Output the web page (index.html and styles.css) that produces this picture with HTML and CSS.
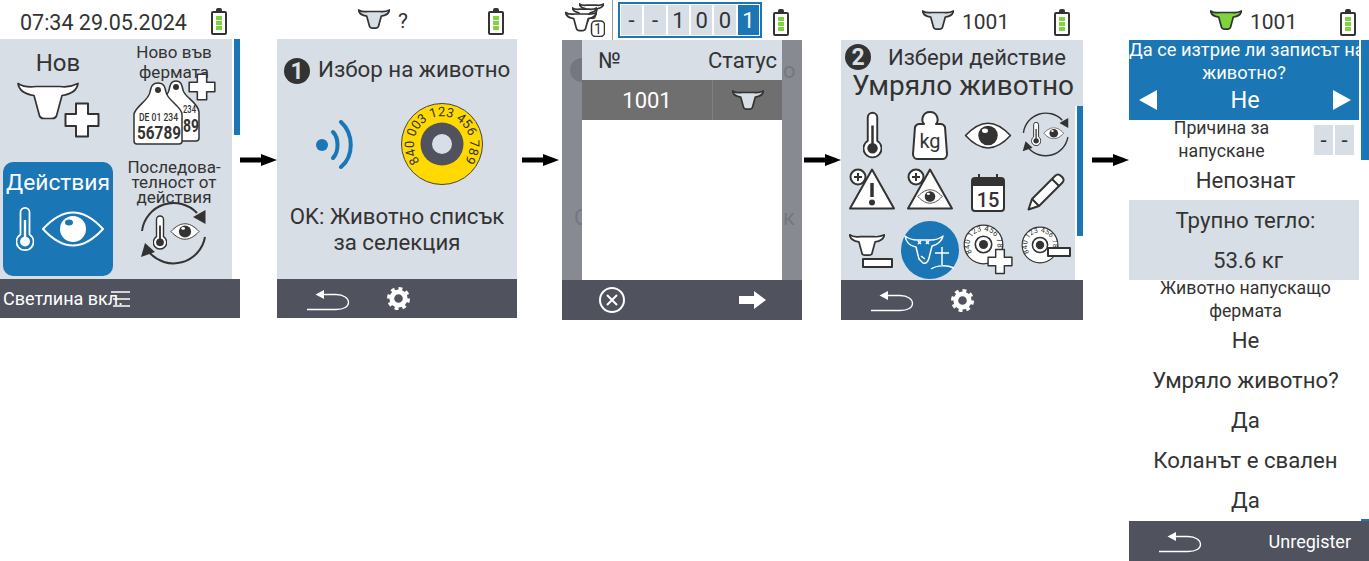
FILE: index.html
```html
<!DOCTYPE html>
<html lang="bg">
<head>
    <meta charset="UTF-8">
    <title>Умряло животно</title>
    <link rel="stylesheet" href="styles.css">
</head>
<body>
<svg class="defs" aria-hidden="true">
    <symbol id="cow" viewBox="0 0 62 38">
        <path class="cow-shape" d="M1 1.500C5 4 12 5.500 19 4.500H43C50 5.500 56 4 61 1.500C60 8 55 12 45 13.500L40 32C39.500 35 38 36.500 35 36.500H27C24 36.500 22.500 35 22 32L17 13.500C7 12 2 8 1 1.500Z"/>
    </symbol>
    <symbol id="plus" viewBox="0 0 36 36">
        <path class="ln" d="M12 1.500H24V12H34.500V24H24V34.500H12V24H1.500V12H12Z"/>
    </symbol>
    <symbol id="back" viewBox="0 0 44 22">
        <path class="soft-line" d="M16 5.500H30C38 5.500 42.500 9.500 42.500 13.500C42.500 17.500 38 20.500 30 20.500H1"/>
        <path class="soft-fill" d="M9.500 5.500L18 1V10Z"/>
    </symbol>
    <symbol id="gear" viewBox="0 0 24 24">
        <circle class="gear-ring" cx="12" cy="12" r="7"/>
        <circle class="gear-teeth" cx="12" cy="12" r="10" pathLength="64"/>
    </symbol>
    <symbol id="thermo" viewBox="0 0 20 50">
        <path class="ln" d="M5 6.500A5 5 0 0 1 15 6.500V31A9.500 9.500 0 1 1 5 31Z"/>
        <rect class="ink" x="8.700" y="15" width="2.600" height="20"/>
        <circle class="ink" cx="10" cy="39" r="5.500"/>
    </symbol>
    <symbol id="eye" viewBox="0 0 64 36">
        <path class="ln" d="M2 18C14 5 24 1.500 32 1.500C40 1.500 50 5 62 18C50 31 40 34.500 32 34.500C24 34.500 14 31 2 18Z"/>
        <circle class="ink" cx="32" cy="18" r="13"/>
        <ellipse class="hi" cx="28" cy="11.500" rx="4" ry="3"/>
    </symbol>
    <symbol id="cycle" viewBox="0 0 66 68">
        <path class="sk" d="M1 31A32 32 0 0 1 56 13"/>
        <path class="sk" d="M64 37A32 32 0 0 1 8 52"/>
        <path class="ink" d="M64.500 10V24L52 17Z"/>
        <path class="ink" d="M0 57L4 43L14 52Z"/>
        <use href="#thermo" x="12" y="15" width="14" height="35"/>
        <use href="#eye" x="29" y="23" width="30" height="17"/>
    </symbol>
    <symbol id="warn" viewBox="0 0 46 42">
        <path class="ln" d="M23 1.500L45 40.500H1Z"/>
        <circle class="ln" cx="9" cy="9" r="7.500"/>
        <path class="sk" d="M5 9H13M9 5V13"/>
    </symbol>
    <symbol id="disc-small" viewBox="0 0 50 50">
        <defs><path id="disc-arc" d="M11 35A17 17 0 1 1 39 35"/></defs>
        <circle class="ln thin" cx="25" cy="25" r="23.500"/>
        <text class="disc-text"><textPath href="#disc-arc" textLength="72">840 123 456 789</textPath></text>
        <circle class="ln" cx="25" cy="25" r="10"/>
        <circle class="ink" cx="25" cy="25" r="5.500"/>
    </symbol>
</svg>

<div class="strip">

    <!-- menu -->
    <section class="screen screen-short">
        <header class="status">
            <span class="clock">07:34 29.05.2024</span>
            <span class="battery"><i></i><i></i><i></i></span>
        </header>
        <div class="panel">
            <div class="menu">
                <div class="cell">
                    <div class="label label-big">Нов</div>
                    <svg class="icon-new" viewBox="0 0 83 57">
                        <use href="#cow" width="62" height="38"/>
                        <use href="#plus" x="47" y="20" width="36" height="36"/>
                    </svg>
                </div>
                <div class="cell">
                    <div class="label label-farm">Ново във<br>фермата</div>
                    <svg class="icon-tags" viewBox="0 0 83 72">
                        <g transform="translate(21 7)">
                            <path class="ln thin" d="M22 1C27 1 28 5 29 10C30 17 44 22 45 32V58Q45 61 42 61H5Q1 61 1 58V32C3 22 14 17 15 10C16 5 17 1 22 1Z"/>
                            <circle class="ink" cx="22" cy="7" r="3"/>
                            <text class="tag-small" x="29" y="33" textLength="13" lengthAdjust="spacingAndGlyphs">234</text>
                            <text class="tag-big" x="29" y="52" textLength="16" lengthAdjust="spacingAndGlyphs">89</text>
                        </g>
                        <g transform="translate(0 9)">
                            <path class="ln thin" d="M25 1C31 1 32 5 33 10C34 18 48 24 49 32V59Q49 62 46 62H4Q1 62 1 59V32C3 24 16 18 17 10C18 5 19 1 25 1Z"/>
                            <circle class="ink" cx="25" cy="8" r="3"/>
                            <text class="tag-small" x="6" y="39" textLength="39" lengthAdjust="spacingAndGlyphs">DE 01 234</text>
                            <text class="tag-big" x="4" y="57" textLength="44" lengthAdjust="spacingAndGlyphs">56789</text>
                        </g>
                        <use href="#plus" x="55" y="0" width="28" height="28"/>
                    </svg>
                </div>
                <div class="cell">
                    <div class="selected">
                        <div class="label label-big">Действия</div>
                        <div class="selected-icons">
                            <svg class="icon-thermo-lg"><use href="#thermo"/></svg>
                            <svg class="icon-eye-lg"><use href="#eye"/></svg>
                        </div>
                    </div>
                </div>
                <div class="cell">
                    <div class="label label-seq">Последова-<br>телност от<br>действия</div>
                    <svg class="icon-cycle-lg"><use href="#cycle"/></svg>
                </div>
            </div>
            <div class="track track-menu"><div class="thumb"></div></div>
        </div>
        <footer class="softkeys">
            <span class="light">Светлина вкл.</span>
            <svg class="burger" viewBox="0 0 19 16">
                <path class="soft-line" d="M0 1H19M2 8H19M2 15H19"/>
            </svg>
        </footer>
    </section>

    <div class="arrow arrow-1"><svg viewBox="0 0 37 12"><path d="M0 3.500H21V0L37 6L21 12V8.500H0Z"/></svg></div>

    <!-- step 1 -->
    <section class="screen screen-short">
        <header class="status status-id">
            <svg class="cow-head cow-grey"><use href="#cow"/></svg>
            <span class="tag-id tag-q">?</span>
            <span class="battery"><i></i><i></i><i></i></span>
        </header>
        <div class="panel panel-col">
            <div class="step-title">
                <span class="step-no">1</span>
                <span class="step-text">Избор на животно</span>
            </div>
            <div class="scan">
                <svg class="waves" viewBox="0 0 38 49">
                    <circle cx="6" cy="25" r="6"/>
                    <path d="M17 12C23 18 23 32 17 38"/>
                    <path d="M25 2C38 14 38 36 25 47"/>
                </svg>
                <svg class="disc" viewBox="0 0 82 82">
                    <defs><path id="disc-big-arc" d="M19 58.500A28 28 0 1 1 63 58.500"/></defs>
                    <circle class="disc-face" cx="41" cy="41" r="40.500"/>
                    <text class="disc-label"><textPath href="#disc-big-arc" textLength="124">840 003 123 456 789</textPath></text>
                    <circle class="disc-ring" cx="41" cy="41" r="21.500"/>
                    <circle class="disc-hole" cx="41" cy="41" r="10"/>
                </svg>
            </div>
            <p class="hint">OK: Животно списък<br>за селекция</p>
        </div>
        <footer class="softkeys">
            <svg class="key-back"><use href="#back"/></svg>
            <svg class="key-gear"><use href="#gear"/></svg>
        </footer>
    </section>

    <div class="arrow arrow-2"><svg viewBox="0 0 37 12"><path d="M0 3.500H21V0L37 6L21 12V8.500H0Z"/></svg></div>

    <!-- animal list -->
    <section class="screen">
        <header class="status status-entry">
            <svg class="icon-herd" viewBox="0 0 40 34">
                <use href="#cow" x="14" y="0" width="25" height="16"/>
                <use href="#cow" x="7" y="4" width="25" height="16"/>
                <use href="#cow" x="0" y="8" width="32" height="21"/>
                <rect class="ln thin" x="26.500" y="18" width="13" height="15.500" rx="4"/>
                <text class="herd-count" x="33" y="31">1</text>
            </svg>
            <span class="divider"></span>
            <div class="entry">
                <span>-</span><span>-</span><span>1</span><span>0</span><span>0</span><span class="on">1</span>
            </div>
            <span class="battery"><i></i><i></i><i></i></span>
        </header>
        <div class="panel dimmed">
            <div class="gutter">
                <span class="ghost-dot"></span>
                <span class="ghost ghost-left">O</span>
            </div>
            <div class="list">
                <div class="list-head"><span>№</span><span>Статус</span></div>
                <div class="list-row">
                    <span class="list-no">1001</span>
                    <span class="list-state"><svg class="cow-head cow-grey"><use href="#cow"/></svg></span>
                </div>
            </div>
            <div class="gutter">
                <span class="ghost ghost-top">о</span>
                <span class="ghost ghost-bottom">к</span>
            </div>
        </div>
        <footer class="softkeys softkeys-list">
            <svg class="key-cancel" viewBox="0 0 26 26">
                <circle cx="13" cy="13" r="12"/>
                <path d="M8 8L18 18M18 8L8 18"/>
            </svg>
            <svg class="key-next" viewBox="0 0 27 18"><path d="M0 5H15V0L27 9L15 18V13H0Z"/></svg>
        </footer>
    </section>

    <div class="arrow arrow-3"><svg viewBox="0 0 37 12"><path d="M0 3.500H21V0L37 6L21 12V8.500H0Z"/></svg></div>

    <!-- step 2 -->
    <section class="screen screen-wide">
        <header class="status status-id">
            <svg class="cow-head cow-grey"><use href="#cow"/></svg>
            <span class="tag-id">1001</span>
            <span class="battery"><i></i><i></i><i></i></span>
        </header>
        <div class="panel panel-col">
            <div class="action-head">
                <div class="action-title">
                    <span class="step-no">2</span>
                    <span class="action-text">Избери действие</span>
                </div>
                <div class="action-name">Умряло животно</div>
            </div>
            <div class="action-body">
                <div class="actions">
                    <div class="act"><svg class="a-thermo"><use href="#thermo"/></svg></div>
                    <div class="act">
                        <svg class="a-kg" viewBox="0 0 36 50">
                            <path class="ln" d="M12 14C9 11 10 2 18 2C26 2 27 11 24 14H29C31 14 32 15 33 17L35 44C35 47 33 49 31 49H5C3 49 1 47 1 44L3 17C4 15 5 14 7 14Z"/>
                            <text class="kg-text" x="18" y="38">kg</text>
                        </svg>
                    </div>
                    <div class="act"><svg class="a-eye"><use href="#eye"/></svg></div>
                    <div class="act"><svg class="a-cycle"><use href="#cycle"/></svg></div>

                    <div class="act"><svg class="a-warn"><use href="#warn"/><path class="warn-bar" d="M23 15V29"/><circle class="ink" cx="23" cy="34.500" r="3"/></svg></div>
                    <div class="act"><svg class="a-warn"><use href="#warn"/><use href="#eye" x="10" y="21" width="26" height="15"/></svg></div>
                    <div class="act">
                        <svg class="a-cal" viewBox="0 0 34 39">
                            <rect class="ln" x="1" y="5" width="32" height="33" rx="3"/>
                            <path class="ink" d="M1 8Q1 5 4 5H30Q33 5 33 8V13H1Z"/>
                            <path class="cal-ring" d="M8 1V8M26 1V8"/>
                            <text class="cal-text" x="17" y="33.500">15</text>
                        </svg>
                    </div>
                    <div class="act">
                        <svg class="a-pencil" viewBox="0 0 38 38">
                            <path class="ln" d="M1.500 36.500L5 26L28 3C30 1 32 1 34 3L35.500 4.500C37 6 37 8 35 10L12 33Z"/>
                            <path class="sk" d="M5 26L12 33M25 6L32 13"/>
                        </svg>
                    </div>

                    <div class="act act-low">
                        <svg class="a-cowminus" viewBox="0 0 44 35">
                            <use href="#cow" width="36" height="24"/>
                            <rect class="ln" x="14" y="26" width="29" height="8"/>
                        </svg>
                    </div>
                    <div class="act">
                        <svg class="a-dead" viewBox="0 0 58 58">
                            <circle class="dead-bg" cx="29" cy="29" r="29"/>
                            <path class="dead-line" d="M4 15C8 18 12 19 16 19H30C34 19 38 18 42 15C41 20 36 24 31 25L28 37C27 41 25 43 22 42L18 38L15 26C9 25 5 21 4 15Z"/>
                            <path class="dead-line" d="M17 20L20 23M20 20L17 23M25 20L28 23M28 20L25 23M20 35L24 38"/>
                            <path class="dead-line" d="M41 26V44M34 32H48"/>
                            <path class="dead-line" d="M30 48C36 44 46 44 53 47"/>
                        </svg>
                    </div>
                    <div class="act">
                        <svg class="a-disc" viewBox="0 0 50 52">
                            <use href="#disc-small" width="41" height="41" x="0" y="0"/>
                            <use href="#plus" x="24" y="24" width="26" height="27"/>
                        </svg>
                    </div>
                    <div class="act">
                        <svg class="a-disc" viewBox="0 0 50 52">
                            <use href="#disc-small" width="38" height="38" x="0" y="2"/>
                            <rect class="ln" x="27" y="24" width="22" height="8"/>
                        </svg>
                    </div>
                </div>
                <div class="track track-actions"><div class="thumb"></div></div>
            </div>
        </div>
        <footer class="softkeys">
            <svg class="key-back"><use href="#back"/></svg>
            <svg class="key-gear"><use href="#gear"/></svg>
        </footer>
    </section>

    <div class="arrow arrow-4"><svg viewBox="0 0 37 12"><path d="M0 3.500H21V0L37 6L21 12V8.500H0Z"/></svg></div>

    <!-- confirm -->
    <section class="screen">
        <header class="status status-id">
            <svg class="cow-head cow-green"><use href="#cow"/></svg>
            <span class="tag-id">1001</span>
            <span class="battery"><i></i><i></i><i></i></span>
        </header>
        <div class="panel panel-form">
            <div class="form">
                <div class="ask">
                    <div class="ask-text">Да се изтрие ли записът на<br>животно?</div>
                    <div class="ask-pick">
                        <span class="tri tri-left"></span>
                        <span class="ask-value">Не</span>
                        <span class="tri tri-right"></span>
                    </div>
                </div>
                <div class="reason">
                    <div class="small-label">Причина за<br>напускане</div>
                    <div class="reason-code"><span>-</span><span>-</span></div>
                </div>
                <div class="row">Непознат</div>
                <div class="row row-grey">Трупно тегло:</div>
                <div class="row row-grey row-weight">53.6 кг</div>
                <div class="row-small small-label">Животно напускащо<br>фермата</div>
                <div class="row">Не</div>
                <div class="row">Умряло животно?</div>
                <div class="row">Да</div>
                <div class="row">Коланът е свален</div>
                <div class="row">Да</div>
            </div>
            <div class="track track-form"><div class="thumb"></div><div class="thumb-end"></div></div>
        </div>
        <footer class="softkeys">
            <svg class="key-back"><use href="#back"/></svg>
            <span class="unregister">Unregister</span>
        </footer>
    </section>

</div>
</body>
</html>
```

FILE: styles.css
```css
body {
    margin: 0;
    background: #fff;
    color: #333;
    font-family: Roboto, "Liberation Sans", sans-serif;
}

.defs {
    display: none;
}

.strip {
    display: flex;
    align-items: flex-start;
    width: 1369px;
}

.screen {
    width: 240px;
    flex-shrink: 0;
}

.screen-wide {
    width: 242px;
}

/* status bar */
.status {
    display: flex;
    align-items: center;
    height: 40px;
    padding-right: 13px;
    box-sizing: border-box;
}

.screen-short .status {
    height: 39px;
}

.clock {
    margin: 6px 0 0 20px;
    font-size: 21.5px;
    white-space: nowrap;
}

.status-id {
    padding-left: 81px;
}

.tag-id {
    margin: 3px 0 0 8px;
    font-size: 21px;
}

.cow-head {
    width: 32px;
    height: 20px;
    margin-top: -1px;
}

.battery {
    display: flex;
    flex-direction: column;
    gap: 1px;
    position: relative;
    width: 16px;
    height: 24px;
    margin: 8px 0 0 auto;
    padding: 3px;
    box-sizing: border-box;
    border: 2px solid #333;
    border-radius: 2px;
}

.screen-short .battery {
    margin-top: 7px;
}

.battery:before {
    content: "";
    position: absolute;
    top: -5px;
    left: 3px;
    width: 6px;
    height: 3px;
    background: #333;
    border-radius: 2px 2px 0 0;
}

.battery i {
    flex: 1;
    background: #7ed53b;
}

/* panels */
.panel {
    display: flex;
    height: 240px;
}

.panel-col {
    display: block;
    background: #d7dee6;
}

.track {
    margin-left: 2px;
    width: 6px;
}

.thumb {
    background: #1a76b5;
}

/* menu screen */
.menu {
    display: grid;
    grid-template-columns: 116px 116px;
    grid-template-rows: 120px 120px;
    background: #d7dee6;
}

.cell {
    display: flex;
    flex-direction: column;
    align-items: center;
    min-width: 0;
}

.label {
    text-align: center;
    white-space: nowrap;
}

.label-big {
    padding-top: 10px;
    font-size: 24px;
    line-height: 28px;
}

.label-farm {
    padding-top: 3px;
    font-size: 17px;
    line-height: 20px;
}

.label-seq {
    padding-top: 1px;
    font-size: 17px;
    line-height: 15px;
}

.icon-new {
    width: 83px;
    height: 57px;
    margin-top: 5px;
}

.icon-tags {
    width: 83px;
    height: 72px;
    margin-top: -9px;
}

.tag-small {
    font-size: 11px;
    font-weight: 500;
    fill: #333;
}

.tag-big {
    font-size: 19px;
    font-weight: 700;
    fill: #333;
}

.selected {
    --ink: #fff;
    --fill: #1a76b5;
    width: 110px;
    height: 114px;
    margin-top: 3px;
    background: #1a76b5;
    border-radius: 10px;
    color: #fff;
}

.selected .label-big {
    padding-top: 7px;
    font-size: 22.8px;
}

.selected-icons {
    display: flex;
    align-items: center;
    gap: 7px;
    margin: 8px 0 0 13px;
}

.icon-thermo-lg {
    width: 18px;
    height: 48px;
}

.icon-eye-lg {
    width: 64px;
    height: 36px;
}

.icon-cycle-lg {
    width: 66px;
    height: 68px;
    margin-top: -5px;
}

.track-menu .thumb {
    height: 96px;
}

/* step titles */
.step-no {
    display: flex;
    align-items: center;
    justify-content: center;
    flex-shrink: 0;
    width: 26px;
    height: 26px;
    background: #333;
    border-radius: 50%;
    color: #d7dee6;
    font-size: 23px;
    font-weight: 700;
}

.step-title {
    display: flex;
    align-items: center;
    gap: 8px;
    padding: 19px 0 0 7px;
}

.step-text {
    margin-top: -4px;
    font-size: 22.3px;
    white-space: nowrap;
}

.scan {
    display: flex;
    align-items: center;
    gap: 47px;
    margin-top: 19px;
    padding-left: 39px;
}

.waves {
    width: 38px;
    height: 49px;
}

.waves circle {
    fill: #1a76b5;
}

.waves path {
    fill: none;
    stroke: #1a76b5;
    stroke-width: 4;
    stroke-linecap: round;
}

.disc {
    width: 82px;
    height: 82px;
}

.disc-face {
    fill: #ffd900;
    stroke: #444;
}

.disc-ring {
    fill: #50525e;
}

.disc-hole {
    fill: #d7dee6;
}

.disc-label {
    font-size: 13px;
    fill: #333;
}

.hint {
    margin: 18px 0 0;
    font-size: 22.2px;
    line-height: 26px;
    text-align: center;
}

/* animal list */
.status-entry {
    padding-left: 3px;
}

.icon-herd {
    width: 40px;
    height: 34px;
    --cow: #fff;
}

.herd-count {
    font-size: 14px;
    fill: #333;
    text-anchor: middle;
}

.divider {
    width: 1px;
    height: 40px;
    margin-left: 7px;
    background: #999;
}

.entry {
    display: grid;
    grid-template-columns: repeat(6, 1fr);
    gap: 2px;
    width: 144px;
    height: 36px;
    margin-left: 5px;
    padding: 1px;
    box-sizing: border-box;
    border: 2px solid #1a76b5;
}

.entry span {
    display: flex;
    align-items: center;
    justify-content: center;
    background: #d7dee6;
    font-size: 22px;
}

.entry .on {
    background: #1a76b5;
    color: #fff;
}

.status-entry .battery {
    margin-left: 11px;
}

.dimmed {
    background: #888a92;
}

.gutter {
    display: flex;
    flex-direction: column;
    width: 20px;
    overflow: hidden;
}

.ghost-dot {
    flex-shrink: 0;
    width: 24px;
    height: 24px;
    margin: 18px 0 0 8px;
    background: #75777f;
    border-radius: 50%;
}

.ghost {
    color: #75777f;
    font-size: 22px;
    line-height: 26px;
}

.ghost-left {
    margin: 123px 0 0 12px;
}

.ghost-top {
    margin: 18px 0 0 1px;
}

.ghost-bottom {
    margin: 121px 0 0 1px;
}

.list {
    width: 200px;
    background: #fff;
}

.list-head {
    display: flex;
    align-items: center;
    justify-content: space-between;
    height: 40px;
    padding: 0 5px 0 16px;
    background: #d7dee6;
    font-size: 22px;
}

.list-row {
    display: flex;
    align-items: center;
    height: 40px;
    background: #6f6f6f;
    color: #fff;
    font-size: 22px;
}

.list-no {
    width: 130px;
    text-align: center;
}

.list-state {
    display: flex;
    align-items: center;
    justify-content: center;
    width: 70px;
    height: 40px;
    box-sizing: border-box;
    border-left: 1px solid #7f8083;
}

/* action picker */
.action-head {
    height: 66px;
    padding-top: 4px;
    box-sizing: border-box;
}

.action-title {
    display: flex;
    align-items: center;
    gap: 17px;
    padding-left: 4px;
}

.action-text {
    font-size: 22px;
    white-space: nowrap;
}

.action-name {
    margin-top: -1px;
    padding-left: 2px;
    font-size: 28px;
    line-height: 34px;
    text-align: center;
    white-space: nowrap;
}

.action-body {
    display: flex;
    height: 174px;
    background: #fff;
}

.actions {
    display: grid;
    grid-template-columns: repeat(4, 58px);
    grid-template-rows: 58px 56px 60px;
    width: 234px;
    padding-left: 2px;
    box-sizing: border-box;
    background: #d7dee6;
}

.act {
    display: flex;
    align-items: center;
    justify-content: center;
}

.a-thermo { width: 19px; height: 48px; }
.a-kg { width: 36px; height: 50px; }
.a-eye { width: 48px; height: 31px; }
.a-cycle { width: 48px; height: 48px; }
.a-warn { width: 46px; height: 42px; margin-top: -6px; }
.a-cal { width: 34px; height: 39px; }
.a-pencil { width: 38px; height: 38px; }
.a-cowminus { width: 44px; height: 35px; }
.a-dead { width: 58px; height: 58px; }
.a-disc { width: 50px; height: 52px; }

.act-low {
    margin-left: -3px;
}

.kg-text {
    font-size: 20px;
    fill: #333;
    text-anchor: middle;
}

.cal-text {
    font-size: 20px;
    font-weight: 500;
    fill: #333;
    text-anchor: middle;
}

.cal-ring {
    fill: none;
    stroke: #333;
    stroke-width: 2;
}

.warn-bar {
    stroke: #333;
    stroke-width: 3.5;
}

.dead-bg {
    fill: #1a76b5;
}

.dead-line {
    fill: none;
    stroke: #fff;
    stroke-width: 1.5;
    stroke-linejoin: round;
}

.disc-text {
    font-size: 9.5px;
    fill: #333;
}

.track-actions {
    height: 130px;
    background: #1a76b5;
}

/* confirm form */
.panel-form {
    height: 481px;
}

.form {
    width: 230px;
}

.ask {
    display: flow-root;
    height: 80px;
    background: #1a76b5;
    color: #fff;
}

.ask-text {
    height: 42px;
    margin-top: -2px;
    font-size: 18.3px;
    line-height: 23px;
    text-align: center;
    white-space: nowrap;
}

.ask-pick {
    display: flex;
    align-items: center;
    justify-content: space-between;
    height: 40px;
    padding: 0 8px 0 10px;
}

.ask-value {
    font-size: 23.5px;
}

.tri {
    width: 0;
    height: 0;
    border-top: 10px solid transparent;
    border-bottom: 10px solid transparent;
}

.tri-left {
    border-right: 18px solid #fff;
}

.tri-right {
    border-left: 18px solid #fff;
}

.reason {
    display: flex;
    align-items: center;
    height: 40px;
}

.small-label {
    font-size: 17.7px;
    line-height: 23px;
    text-align: center;
    white-space: nowrap;
}

.reason .small-label {
    width: 185px;
}

.reason-code {
    display: flex;
    gap: 2px;
}

.reason-code span {
    display: flex;
    align-items: center;
    justify-content: center;
    width: 19px;
    height: 30px;
    background: #d7dee6;
    font-size: 22px;
}

.row {
    display: flex;
    align-items: center;
    justify-content: center;
    height: 40px;
    padding-left: 3px;
    font-size: 22.2px;
    white-space: nowrap;
}

.row-grey {
    background: #d7dee6;
}

.row-weight {
    padding-left: 8px;
}

.row-small {
    height: 40px;
    margin-top: -3px;
    padding-bottom: 3px;
    padding-left: 3px;
}

.track-form {
    display: flex;
    flex-direction: column;
    justify-content: space-between;
    width: 8px;
}

.track-form .thumb {
    height: 120px;
}

.thumb-end {
    height: 2px;
    background: #1a76b5;
}

/* soft keys */
.softkeys {
    display: flex;
    align-items: center;
    gap: 37px;
    height: 40px;
    padding-left: 29px;
    background: #50525e;
    color: #fff;
}

.screen-short .softkeys {
    height: 39px;
}

.screen:first-child .softkeys {
    gap: 0;
    padding-left: 3px;
}

.light {
    width: 108px;
    font-size: 18px;
    white-space: nowrap;
}

.burger {
    width: 19px;
    height: 16px;
}

.key-back {
    width: 44px;
    height: 22px;
    margin-top: 2px;
}

.key-gear {
    width: 23px;
    height: 23px;
}

.softkeys-list {
    justify-content: space-between;
    padding: 0 36px 0 37px;
}

.key-cancel {
    width: 26px;
    height: 26px;
}

.key-cancel circle,
.key-cancel path {
    fill: none;
    stroke: #fff;
    stroke-width: 2;
}

.key-next {
    width: 27px;
    height: 18px;
    fill: #fff;
}

.unregister {
    margin-left: auto;
    padding-right: 18px;
    font-size: 18px;
}

/* svg parts */
.ln {
    fill: var(--fill, #fff);
    stroke: var(--ink, #333);
    stroke-width: 2;
    stroke-linejoin: round;
}

.ln.thin {
    stroke-width: 1.5;
}

.sk {
    fill: none;
    stroke: var(--ink, #333);
    stroke-width: 2;
}

.ink {
    fill: var(--ink, #333);
}

.hi {
    fill: var(--fill, #fff);
}

.cow-shape {
    fill: var(--cow, #fff);
    stroke: #333;
    stroke-width: 1.7px;
    stroke-linejoin: round;
    vector-effect: non-scaling-stroke;
}

.cow-grey {
    --cow: #d7dee6;
}

.cow-green {
    --cow: #7ed53b;
}

.soft-line {
    fill: none;
    stroke: #fff;
    stroke-width: 1.3;
}

.soft-fill {
    fill: #fff;
}

.gear-ring {
    fill: none;
    stroke: #fff;
    stroke-width: 5;
}

.gear-teeth {
    fill: none;
    stroke: #fff;
    stroke-width: 4;
    stroke-dasharray: 4 4;
}

/* arrows */
.arrow {
    flex-shrink: 0;
    box-sizing: border-box;
    margin-top: 154px;
    height: 12px;
}

.arrow svg {
    display: block;
    width: 37px;
    height: 12px;
}

.arrow-1 { width: 37px; }
.arrow-2 { width: 45px; padding-left: 5px; }
.arrow-3 { width: 39px; padding-left: 2px; }
.arrow-4 { width: 46px; padding-left: 9px; }
```
